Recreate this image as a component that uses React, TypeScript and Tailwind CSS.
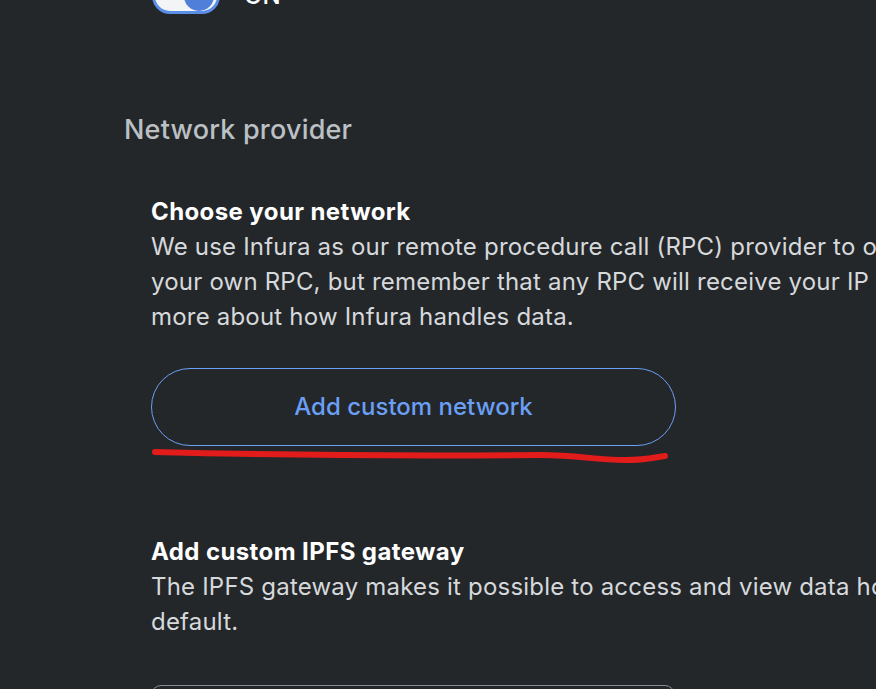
export default function App() {
  const rpcLines = [
    "We use Infura as our remote procedure call (RPC) provider to offer the most reliable and private access to Ethereum data we can. You can choose",
    "your own RPC, but remember that any RPC will receive your IP address and Ethereum wallet to make transactions. Read our privacy policy to learn",
    "more about how Infura handles data.",
  ];
  const ipfsLines = [
    "The IPFS gateway makes it possible to access and view data hosted by third parties. You can add a custom IPFS gateway or continue using the",
    "default.",
  ];

  return (
    <div
      className="w-[876px] h-[689px] overflow-hidden bg-[#24272a] text-white"
      style={{ fontFamily: "Inter, 'Noto Sans', sans-serif" }}
    >
      <div className="flex flex-col pl-[124px] -mt-[22px]">
        {/* toggle (scrolled mostly out of view) */}
        <div className="flex items-center gap-6 pl-[28px] h-[36px]">
          <div className="w-[68px] h-[36px] rounded-full border-[3px] border-[#5b8ee6] bg-[#f2f4f6] flex items-center justify-end pr-[3px]">
            <div className="w-[30px] h-[30px] rounded-full bg-[#4f7fd8]" />
          </div>
          <span className="text-[24px] font-medium">ON</span>
        </div>

        {/* section title */}
        <h2 className="mt-[98px] text-[27px] leading-[36px] font-medium text-[#bbc0c5] tracking-[0.2px]">
          Network provider
        </h2>

        <div className="flex flex-col pl-[27px] mt-[46px]">
          <h3 className="text-[24px] leading-[35px] font-bold tracking-[0.4px]">Choose your network</h3>
          <div className="text-[24px] leading-[35px] text-[#d6d9dc] tracking-[0.2px]">
            {rpcLines.map((l) => (
              <p key={l} className="whitespace-nowrap">
                {l}
              </p>
            ))}
          </div>

          <div className="mt-[34px] w-[525px] flex flex-col">
            <button className="h-[78px] w-full rounded-full border border-[#6a9ff5] text-[#6a9ff5] text-[24px] font-medium">
              Add custom network
            </button>
            {/* red annotation stroke */}
            <svg width="525" height="22" viewBox="0 0 525 22" className="-mt-[1px]">
              <path
                d="M4 7 C 120 10, 260 11, 390 10 C 430 10, 440 15, 475 15 C 495 15, 505 12, 514 11"
                fill="none"
                stroke="#e21b1b"
                strokeWidth="6"
                strokeLinecap="round"
              />
            </svg>
          </div>

          <h3 className="mt-[67px] text-[24px] leading-[35px] font-bold tracking-[0.4px]">Add custom IPFS gateway</h3>
          <div className="text-[24px] leading-[35px] text-[#d6d9dc] tracking-[0.2px]">
            {ipfsLines.map((l) => (
              <p key={l} className="whitespace-nowrap">
                {l}
              </p>
            ))}
          </div>

          <div className="mt-[46px] w-[524px] h-[56px] rounded-[10px] border border-[#848c96]" />
        </div>
      </div>
    </div>
  );
}
